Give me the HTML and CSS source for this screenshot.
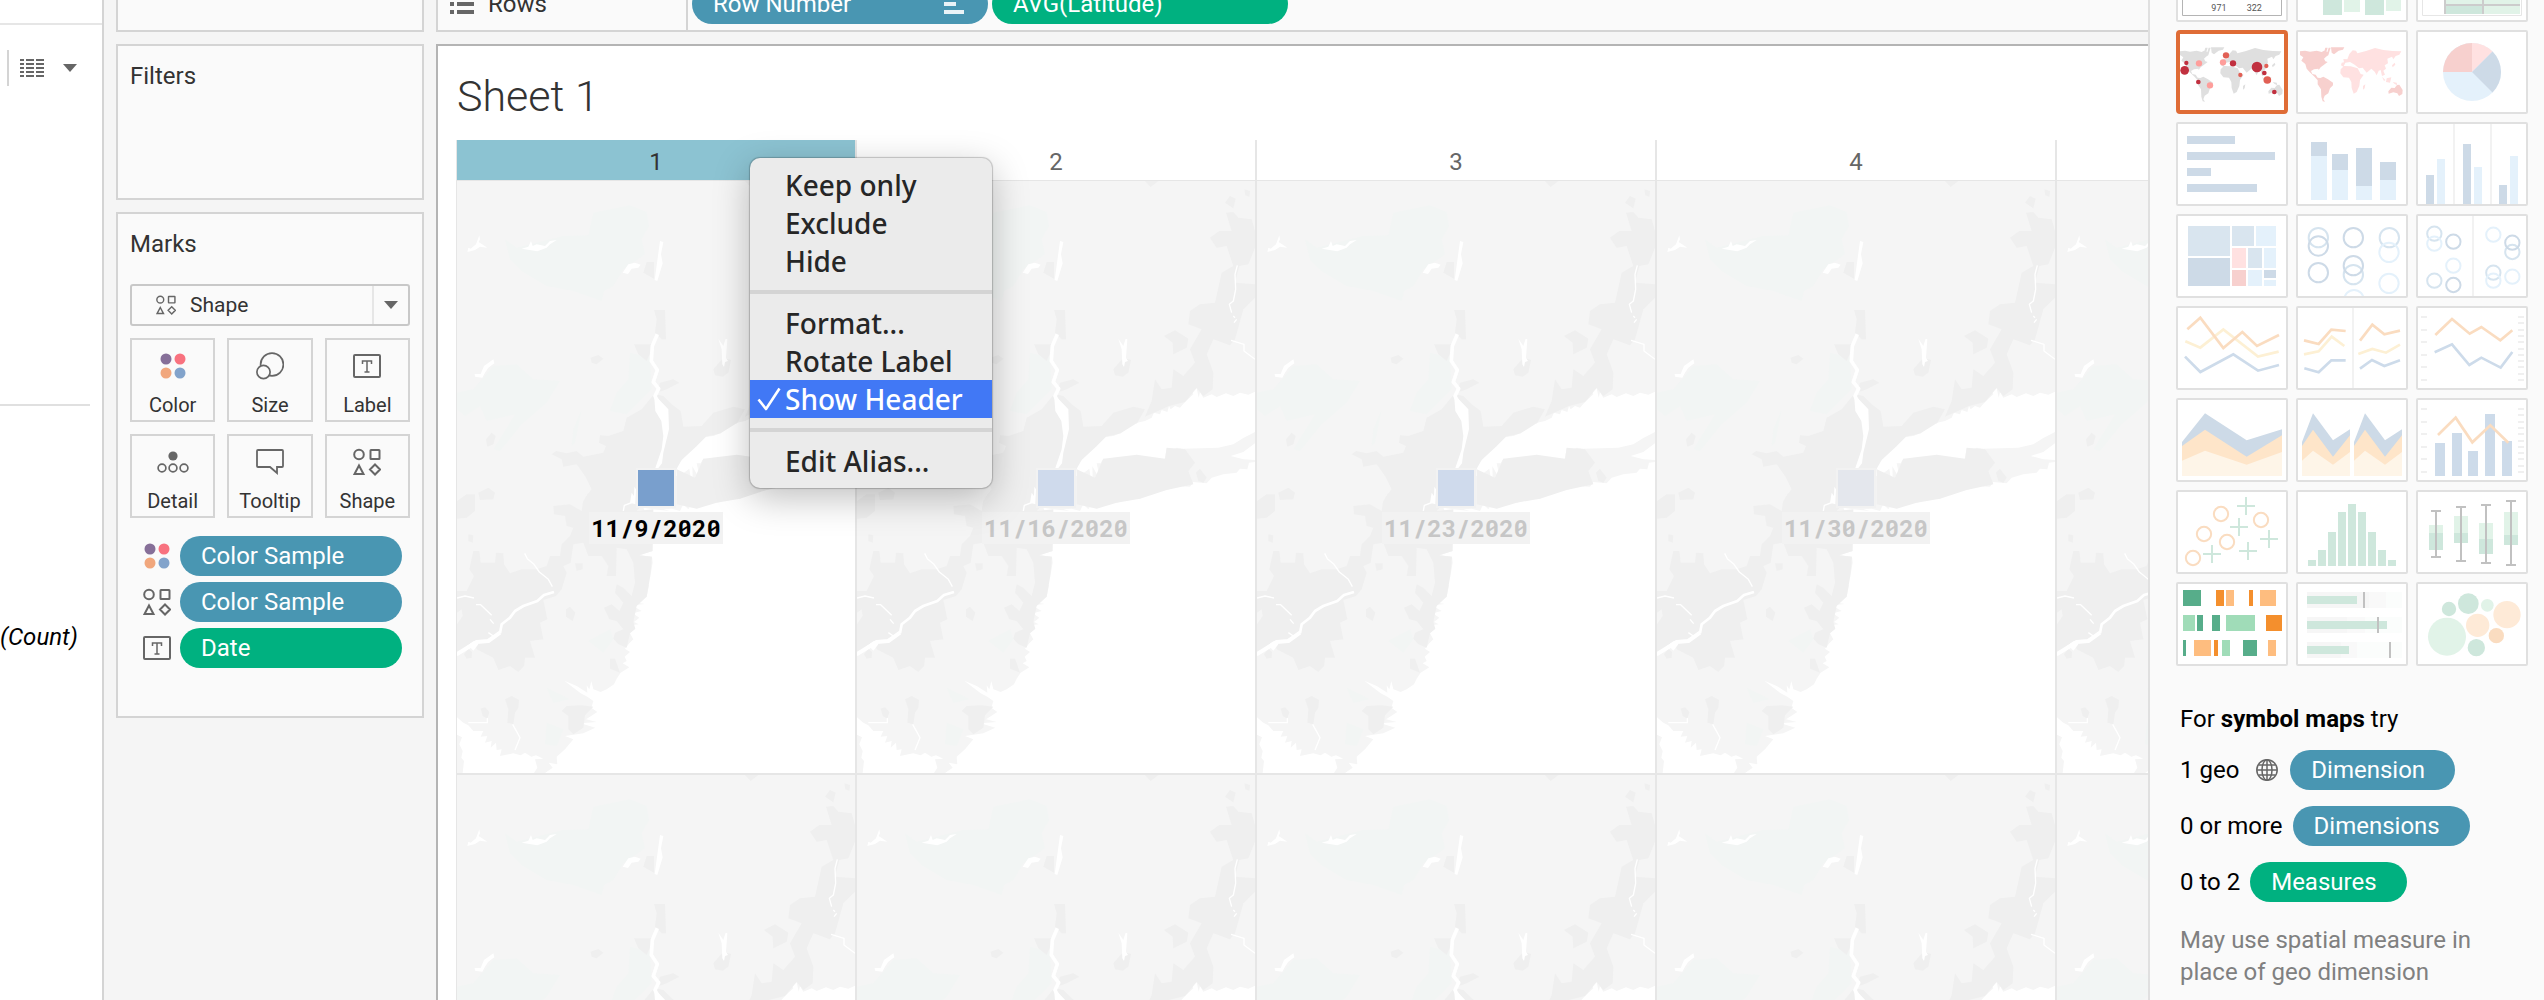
FILE: index.html
```html
<!DOCTYPE html>
<html lang="en">
<head>
<meta charset="utf-8">
<title>Sheet 1</title>
<link rel="stylesheet" href="styles.css">
</head>
<body>
<svg class="defs" aria-hidden="true">
  <defs>
    <symbol id="i-color" viewBox="0 0 26 26">
      <circle cx="6" cy="6" r="5.5" fill="#866f98"/><circle cx="20" cy="6" r="5.5" fill="#f8727f"/>
      <circle cx="6" cy="20" r="5.5" fill="#f1a77d"/><circle cx="20" cy="20" r="5.5" fill="#82a3cb"/>
    </symbol>
    <symbol id="i-shape" viewBox="0 0 28 28">
      <g fill="none" stroke="#666" stroke-width="2">
        <circle cx="6" cy="6.500" r="4.800"/><rect x="17.500" y="2" width="9" height="9" rx=".5"/>
        <path d="M6 17.500L10.500 26h-9zM22 16.500l5 5-5 5-5-5z"/>
      </g>
    </symbol>
    <symbol id="i-text" viewBox="0 0 28 24">
      <rect x="1" y="1" width="26" height="22" rx="1" fill="none" stroke="#666" stroke-width="2"/>
      <path d="M9.500 10V7h9v3M14 7v11M11.500 18h5" fill="none" stroke="#666" stroke-width="1.500"/>
    </symbol>
    <symbol id="i-size" viewBox="0 0 28 28">
      <g fill="#fafafa" stroke="#666" stroke-width="1.700"><circle cx="16" cy="12.500" r="11.400"/><circle cx="7.500" cy="20" r="6.600"/></g>
    </symbol>
    <symbol id="i-detail" viewBox="0 0 32 22">
      <circle cx="16" cy="5" r="4.600" fill="#666"/>
      <g fill="none" stroke="#666" stroke-width="1.700"><circle cx="5" cy="17" r="3.900"/><circle cx="16" cy="17" r="3.900"/><circle cx="27" cy="17" r="3.900"/></g>
    </symbol>
    <symbol id="i-tooltip" viewBox="0 0 28 28">
      <path d="M2 2h24q1 0 1 1v15q0 1-1 1h-5v6l-7-6H2q-1 0-1-1V3q0-1 1-1z" fill="none" stroke="#666" stroke-width="1.800"/>
    </symbol>
    <symbol id="terrain" viewBox="21 15 1194 1776">
      <path fill="#f5f5f5" d="M21 15H1215V647L1195 656 1170 650 1150 660 1128 652 1100 663 1085 655 1060 665 1050 648 1046 665 1040 636 1026 648 1030 655 1005 678 990 695 975 690 962 700 957 690 952 708 935 702 930 715 912 710 905 725 885 735 862 740 857 745 856 715 847 742 838 732 838 752 815 762 812 772 790 780 768 782 750 790 738 812 722 820 705 830 695 852 682 862 678 900 690 898 700 918 702 890 718 878 722 905 728 902 727 870 742 898 745 885 740 862 752 862 760 848 790 850 805 868 810 850 830 858 825 842 850 852 860 836 915 852 945 848 950 815 960 825 980 815 1000 818 1105 815 1150 805 1180 786 1215 768V802L1180 828 1142 840 1180 850 1215 852V858L1197 860 1192 880 1170 878 1160 890 1120 895 1085 905 1070 922 1030 918 1020 932 980 930 950 942 920 938 905 955 885 948 870 968 830 970 800 980 770 980 740 998 725 982 715 1000 700 985 690 1005 665 998 640 1000 660 1005 610 1000 580 995 590 1020 608 1105 588 1118 608 1125 568 1138 606 1142 608 1160 600 1205 578 1222 597 1228 590 1262 570 1265 560 1256 570 1282 585 1284 545 1288 575 1305 548 1312 568 1325 552 1338 566 1345 522 1350 556 1358 540 1372 550 1390 538 1402 525 1418 540 1428 524 1442 530 1455 518 1462 538 1474 512 1490 500 1508 492 1525 470 1540 452 1548 430 1540 424 1515 418 1540 410 1528 412 1550 380 1530 343 1514 392 1552 412 1562 430 1575 424 1595 442 1608 408 1630 440 1638 392 1642 436 1655 400 1672 345 1680 370 1690 345 1720 320 1742 322 1765 296 1760 308 1775 285 1791H252L262 1775 255 1750 280 1748 258 1738 244 1742 225 1730 212 1738 190 1732 150 1740 155 1720 140 1722 138 1700 122 1715 125 1695 105 1700 112 1680 92 1682 100 1665 70 1665 55 1648 40 1640 21 1624z"/>
      <path fill="#f5f5f5" d="M21 1676L36 1684 28 1705 38 1725 34 1745 42 1755 38 1791H21z"/>
      <g fill="#f2f5f4">
        <path d="M165 190L200 215 340 180 415 178 430 110 540 88 590 108 597 150 575 190 585 235 520 280 490 330 462 345 455 375 370 345 290 330 215 285 180 250z"/>
        <path d="M130 570L200 565 250 610 330 615 290 680 215 745 150 825 130 820 195 715 110 735 90 690 45 720 21 700V650L70 640zM540 530L600 545 605 640 530 715 480 705 500 650 535 610zM395 700L375 800 365 810 370 760zM415 1395L480 1360 490 1390 460 1430z"/>
        <path d="M290 1535L360 1570 310 1580zM290 1640L340 1660 320 1710 285 1705z"/>
      </g>
      <g fill="#efefef">
        <path d="M885 15L925 15 902 33zM1125 80L1140 60 1157 68 1150 97zM1183 40L1200 45 1198 62 1186 58zM1080 185L1108 165 1145 165 1128 110 1150 108 1165 125 1205 130 1215 165V215L1195 265 1168 270 1155 320 1215 325V365L1180 400 1155 490 1140 508 1090 490 1070 535 1090 590 1088 640 1060 660 1040 636 1005 678 957 690 912 710 885 722 905 675 915 610 935 640 965 635 970 580 1000 600 1035 560 1020 520 1055 460 1015 445 1020 405 1050 385 1095 380 1115 290 1150 270 1130 210 1100 215z"/>
        <path d="M885 700L862 740 812 772 768 782 738 812 695 852 680 878 560 1005 610 1000 608 1125 568 1138 606 1142 600 1205 590 1262 560 1290 550 1338 556 1358 540 1372 530 1415 505 1405 490 1388 495 1370 520 1360 500 1335 478 1330 462 1295 485 1285 508 1305 520 1280 495 1250 500 1225 520 1235 545 1260 555 1220 550 1160 530 1120 500 1115 498 1200 470 1200 475 1170 455 1140 415 1140 400 1100 370 1105 362 1160 340 1170 350 1190 335 1240 318 1260 280 1272 292 1330 270 1340 280 1390 240 1395 255 1445 225 1445 222 1470 205 1488 180 1470 145 1482 130 1445 80 1420 75 1395 21 1430V1245L50 1245 72 1200 58 1180 70 1125 88 1125 92 1160 135 1160 138 1130 160 1132 162 1165 180 1192 215 1180 260 1180 290 1170 300 1140 330 1140 335 1105 360 1080 370 1055 350 1050 345 1020 312 1015 310 990 360 985 395 1005 400 970 425 940 405 900 380 865 340 872 335 850 305 835 318 825 350 832 380 825 400 842 460 830 468 810 447 800 450 778 475 780 520 765 530 725 575 700 612 655 640 660 665 685 692 705 700 752 755 750 790 710 850 692z"/>
        <path d="M580 290L590 258 612 258 612 308zM612 402L645 402 648 490 635 490 615 470 620 430zM552 505L612 505 590 555 565 535zM422 545L445 537 460 548 440 565 425 560zM630 620L670 610 688 620 650 640 620 650zM790 580L820 545 843 552 835 590 818 602 795 598zM942 480L975 463 1015 488 1010 515 970 535 968 500zM108 790L125 770 137 780 130 805 112 812zM21 975L50 955 75 955 75 1005 50 1025 21 1028zM85 950L115 935 135 950 130 970 90 972z"/>
        <path d="M680 880L735 905 760 848 860 836 945 848 950 815 1005 820 1035 860 1015 885 1030 925 950 942 870 968 800 980 740 998 680 985zM1038 890L1050 878 1070 905 1060 920 1045 915z"/>
        <path d="M55 1075L70 1078 68 1100 55 1095zM375 1162L398 1162 398 1180 380 1185zM348 1300L360 1292 376 1310 368 1335 348 1322zM480 1448L495 1448 510 1490 480 1478zM42 1435L55 1418 66 1428 65 1445 50 1448zM92 1598L105 1594 118 1608 112 1628 98 1620zM165 1570L185 1560 207 1572 205 1595 195 1610 190 1645 172 1640 175 1600zM335 1605L350 1590 395 1588 430 1592 405 1618 400 1655 370 1675 355 1660 355 1620z"/>
      </g>
      <path fill="#f5f5f5" d="M385 990L405 960 410 920 420 940 395 985zM21 1310L35 1300 38 1320 21 1345z"/>
      <g fill="none" stroke="#fff" stroke-linejoin="round">
        <path stroke-width="12" d="M21 1434L80 1398 115 1395 150 1370"/>
        <path stroke-width="8" d="M150 1372L155 1345 180 1325 195 1305 220 1290 262 1275 282 1257 312 1248"/>
        <path stroke-width="4" d="M224 1132L232 1148 252 1165 268 1188 295 1210 307 1232M21 1266L45 1260 72 1266M78 1286L92 1286 125 1318M120 1330L131 1343M115 1370L130 1380M1143 493L1182 505V525L1215 550M1162 268L1155 295 1157 340 1150 375 1138 385 1145 410M1150 420L1155 425M1152 440L1160 430M520 1005L523 988 550 978M188 1645L210 1685 195 1722M55 1640H112V1626"/>
        <path stroke-width="11" d="M622 475L607 510 604 555 622 582 610 618 626 638 615 660 630 690"/>
      </g>
      <g fill="#fff">
        <path d="M630 195L640 198 633 235 638 262 622 315 614 312zM612 655L655 700 657 760 640 830 636 862 625 876 616 876 635 820 640 780 634 735 616 705zM518 290L535 265 555 260 572 266 565 275 545 278 534 294zM52 228L55 215 62 218 78 205 88 178 90 190 86 198 112 215 90 212 75 222zM215 218L235 212 243 195 248 210 260 205 285 210 300 195 320 192 300 205 290 215 262 226zM74 594H92L102 570 130 550 133 562 115 575 105 590 97 605 75 602zM805 488L820 510 827 488 832 490 828 545 834 555 825 558 822 573 817 565 815 520zM540 980L545 950 552 960 553 932 558 940 556 985z"/>
        <path d="M21 1433L70 1396 85 1405 70 1424 62 1415 45 1425 21 1440z"/>
      </g>
    </symbol>
    <symbol id="land-west" viewBox="120 102 312 228" overflow="visible">
      <path d="M120 154L135 152 150 155 170 152 185 156 196 150 202 157 206 143 212 143 208 155 205 166 198 170 192 176 196 184 203 186 192 194 182 202 176 210 175 206 162 208 153 213 157 222 167 224 173 233 181 234 190 230 204 238 219 248 219 256 210 265 205 280 194 287 190 298 195 305 188 304 184 290 183 268 173 253 173 241 162 229 148 215 140 206 136 192 124 182 130 172 120 165zM196 143L203 143 200 153 194 150zM213 142H253L249 149 236 152 222 163 215 158zM385 274L394 263 404 264 411 255 418 254 428 270 427 282 417 288 412 280 400 277 386 281z"/>
    </symbol>
    <symbol id="land-east" viewBox="120 102 312 228" overflow="visible">
      <path d="M243 196L245 188 252 187 250 177 262 178 268 162 278 151 288 152 292 160 318 153 345 144 370 150 398 153 424 154 418 164 407 168 400 178 396 170 382 176 384 190 374 196 378 206 370 212 375 224 366 228 362 210 356 212 350 226 344 215 334 206 320 218 308 203 297 205 284 194 270 186 256 188 250 200zM242 208L252 198 272 199 293 205 302 222 311 224 300 240 298 258 290 276 281 281 275 264 274 246 267 233 250 232 241 220zM309 258L316 253 314 265 309 269zM366 230L376 240 372 243zM380 235L394 232 390 248 378 246zM398 246L410 248 412 256 404 252zM396 196L404 188 406 194 398 202z"/>
    </symbol>
  </defs>
</svg>

<div class="app">
  <aside class="data-pane">
    <div class="data-tools">
      <button class="list-view" aria-label="View data">
        <svg width="24" height="18" viewBox="0 0 24 18"><path d="M0 1h24M0 5h24M0 9h24M0 13h24M0 17h24" stroke="#666" stroke-width="2"/><path d="M5 0v18M15 0v18" stroke="#fff" stroke-width="2"/></svg>
      </button>
      <button class="caret-button" aria-label="Data pane menu"><span class="caret"></span></button>
    </div>
    <div class="fields"></div>
    <p class="measure">(Count)</p>
  </aside>

  <aside class="cards">
    <section class="card card-pages"></section>
    <section class="card card-filters"><h2>Filters</h2></section>
    <section class="card card-marks">
      <h2>Marks</h2>
      <div class="mark-type">
        <select aria-label="Mark type"><option>Shape</option></select>
        <svg width="20" height="20"><use href="#i-shape"/></svg>
        <span class="drop"><span class="caret"></span></span>
      </div>
      <div class="mark-buttons">
        <button><svg width="26" height="26"><use href="#i-color"/></svg><span>Color</span></button>
        <button><svg width="28" height="28"><use href="#i-size"/></svg><span>Size</span></button>
        <button><svg width="28" height="24"><use href="#i-text"/></svg><span>Label</span></button>
        <button><svg width="32" height="22"><use href="#i-detail"/></svg><span>Detail</span></button>
        <button><svg width="28" height="28"><use href="#i-tooltip"/></svg><span>Tooltip</span></button>
        <button><svg width="28" height="28"><use href="#i-shape"/></svg><span>Shape</span></button>
      </div>
      <ul class="encodings">
        <li><svg width="26" height="26"><use href="#i-color"/></svg><button class="pill blue">Color Sample</button></li>
        <li><svg width="28" height="28"><use href="#i-shape"/></svg><button class="pill blue">Color Sample</button></li>
        <li><svg width="28" height="24"><use href="#i-text"/></svg><button class="pill green">Date</button></li>
      </ul>
    </section>
  </aside>

  <main class="workspace">
    <section class="shelf">
      <div class="shelf-name">
        <svg width="24" height="20" viewBox="0 0 24 20"><path d="M0 2h4M7 2h17M0 10h4M7 10h17M0 18h4M7 18h17" stroke="#666" stroke-width="4"/></svg>
        <span>Rows</span>
      </div>
      <div class="shelf-pills">
        <button class="pill blue">Row Number
          <svg width="20" height="20" viewBox="0 0 20 20"><path d="M0 2h8M0 10h12M0 18h20" stroke="#eaf3f7" stroke-width="4"/></svg>
        </button>
        <button class="pill green">AVG(Latitude)</button>
      </div>
    </section>

    <section class="sheet">
      <h1>Sheet 1</h1>
      <div class="view">
        <div class="trellis">
          <div class="head selected">1</div><div class="head">2</div><div class="head">3</div><div class="head">4</div><div class="head"></div>
          <div class="map active"><svg><use href="#terrain"/></svg><div class="mark"><i class="swatch c1"></i><b>11/9/2020</b></div></div>
          <div class="map"><svg><use href="#terrain"/></svg><div class="mark"><i class="swatch c2"></i><b>11/16/2020</b></div></div>
          <div class="map"><svg><use href="#terrain"/></svg><div class="mark"><i class="swatch c2"></i><b>11/23/2020</b></div></div>
          <div class="map"><svg><use href="#terrain"/></svg><div class="mark"><i class="swatch c3"></i><b>11/30/2020</b></div></div>
          <div class="map"><svg><use href="#terrain"/></svg></div>
          <div class="map"><svg><use href="#terrain"/></svg></div>
          <div class="map"><svg><use href="#terrain"/></svg></div>
          <div class="map"><svg><use href="#terrain"/></svg></div>
          <div class="map"><svg><use href="#terrain"/></svg></div>
          <div class="map"><svg><use href="#terrain"/></svg></div>
        </div>
      </div>
      <div class="menu" role="menu">
        <button role="menuitem">Keep only</button>
        <button role="menuitem">Exclude</button>
        <button role="menuitem">Hide</button>
        <hr>
        <button role="menuitem">Format...</button>
        <button role="menuitem">Rotate Label</button>
        <button role="menuitemcheckbox" aria-checked="true" class="on"><svg width="24" height="24" viewBox="0 0 24 24"><path d="M1.500 12.500L9 22 22.500 1.500" fill="none" stroke="#fff" stroke-width="2.600" stroke-linejoin="round"/></svg>Show Header</button>
        <hr>
        <button role="menuitem">Edit Alias...</button>
      </div>
    </section>
  </main>

  <aside class="show-me">
    <div class="gallery">
      <button aria-label="Text table"><svg viewBox="114 -180 324 240"><path d="M127.500-160V46.500H424.500V-160" fill="none" stroke="#b4b4b4" stroke-width="3"/><g font-family="Roboto" font-size="27" fill="#555"><text x="214" y="32">971</text><text x="320" y="32">322</text></g></svg></button>
      <button aria-label="Heat map"><svg viewBox="474 -180 324 240"><path fill="#cee7dc" d="M549-30h57v75h-57zM675-30h57v75h-57z"/><path fill="#e1f3e8" d="M612-30h48v66h-48zM738-30h45v63h-45z"/></svg></button>
      <button aria-label="Highlight table"><svg viewBox="834 -180 324 240"><path fill="none" stroke="#e6e6e6" stroke-width="3" d="M847.500-160V46.500H1144.500V-160"/><path fill="#e1f3e8" d="M915-60h225V42H915z"/><path fill="#cee7dc" d="M915 15h114v27H915z"/><path d="M915-60V42M1029-60V42M912 15h228" stroke="#ccc" stroke-width="6" fill="none"/></svg></button>

      <button aria-label="Symbol map" class="chosen"><svg viewBox="120 102 312 228"><g fill="#dfdfdf"><use href="#land-west" x="120" y="102" width="312" height="228"/><use href="#land-east" x="120" y="102" width="312" height="228"/></g><g fill="#c1303f"><circle cx="139" cy="189" r="6.500"/><circle cx="134" cy="211" r="13"/><circle cx="279" cy="190" r="9.500"/><circle cx="351" cy="201" r="16"/><circle cx="373" cy="219" r="7"/><circle cx="175" cy="246" r="7"/><circle cx="403" cy="276" r="7"/></g><g fill="#e16055"><circle cx="258" cy="166" r="9.500"/><circle cx="379" cy="198" r="6.500"/><circle cx="301" cy="225" r="6.500"/><circle cx="382" cy="240" r="11.500"/></g><g fill="#fe9e9b"><circle cx="177" cy="190" r="9.500"/><circle cx="249" cy="187" r="9.500"/><circle cx="210" cy="256" r="9.500"/></g></svg></button>
      <button aria-label="Map"><svg viewBox="114 96 324 240"><use href="#land-west" x="120" y="102" width="312" height="228" fill="#f7d0ce"/><use href="#land-east" x="120" y="102" width="312" height="228" fill="#ffe1e1"/></svg></button>
      <button aria-label="Pie chart"><svg viewBox="834 96 324 240"><circle cx="996" cy="216" r="87" fill="#e4f1fb"/><path fill="#f7d0ce" d="M996 216H909A87 87 0 0 1 996 129z"/><path fill="#ffe1e1" d="M996 216V129A87 87 0 0 1 1057.500 154.500z"/><path fill="#cddae7" d="M996 216L1057.500 154.500A87 87 0 0 1 1057.500 277.500z"/></svg></button>

      <button aria-label="Horizontal bars"><svg viewBox="114 372 324 240"><path fill="#cddae7" d="M141 408h144v24H141zM141 456h264v24H141zM141 504h72v24h-72zM141 552h210v24H141z"/></svg></button>
      <button aria-label="Stacked bars"><svg viewBox="474 372 324 240"><path fill="#e4f1fb" d="M513 468h48v132h-48zM576 510h48v90h-48zM648 558h48v42h-48zM720 540h48v60h-48z"/><path fill="#cddae7" d="M513 426h48v42h-48zM576 462h48v48h-48zM648 444h48v114h-48zM720 486h48v54h-48z"/></svg></button>
      <button aria-label="Side-by-side bars"><svg viewBox="834 372 324 240"><path fill="#f2f2f2" d="M939 372h6v240h-6zM1050 372h6v240h-6z"/><path fill="#cddae7" d="M858 525h24v87h-24zM969 432h24v180h-24zM1077 555h24v57h-24z"/><path fill="#e4f1fb" d="M891 477h24v135h-24zM1002 501h24v111h-24zM1110 468h24v144h-24z"/></svg></button>

      <button aria-label="Treemap"><svg viewBox="114 648 324 240"><path fill="#d9e5ef" d="M144 678h126v90H144zM276 678h66v60h-66zM324 744h42v60h-42z"/><path fill="#e4f1fb" d="M348 678h60v60h-60zM372 744h36v60h-36zM324 810h42v48h-42zM372 840h36v18h-36z"/><path fill="#cddae7" d="M144 774h126v84H144zM372 810h36v24h-36z"/><path fill="#ffe1e1" d="M276 744h42v60h-42z"/><path fill="#f7d0ce" d="M276 810h42v48h-42z"/></svg></button>
      <button aria-label="Circle views"><svg viewBox="474 648 324 240"><g fill="none" stroke-width="6"><g stroke="#d6e4ef"><circle cx="535" cy="713" r="29"/><circle cx="640" cy="824" r="29"/><circle cx="748" cy="713" r="29"/></g><g stroke="#cddae7"><circle cx="535" cy="738" r="29"/><circle cx="535" cy="818" r="29"/><circle cx="640" cy="713" r="29"/><circle cx="640" cy="797" r="29"/></g><g stroke="#e4f1fb"><circle cx="747" cy="757" r="29"/><circle cx="747" cy="850" r="29"/><circle cx="642" cy="899" r="29"/></g></g></svg></button>
      <button aria-label="Side-by-side circles"><svg viewBox="834 648 324 240"><path fill="#f2f2f2" d="M996 648h6v240h-6z"/><g fill="none" stroke-width="6"><g stroke="#d6e4ef"><circle cx="883" cy="701" r="21.500"/><circle cx="883" cy="842" r="21.500"/><circle cx="1117" cy="756" r="21.500"/><circle cx="1060" cy="818" r="21.500"/></g><g stroke="#cddae7"><circle cx="940" cy="725" r="21.500"/><circle cx="940" cy="855" r="21.500"/><circle cx="1117" cy="728" r="21.500"/></g><g stroke="#e4f1fb"><circle cx="883" cy="731" r="21.500"/><circle cx="940" cy="797" r="21.500"/><circle cx="1060" cy="704" r="21.500"/><circle cx="1060" cy="842" r="21.500"/><circle cx="1117" cy="830" r="21.500"/></g></g></svg></button>

      <button aria-label="Continuous lines"><svg viewBox="114 24 324 240"><g fill="none" stroke-width="8"><path stroke="#fdf0d4" d="M136 124L181 143 250 88 354 170 416 155"/><path stroke="#fadcc0" d="M142 88L181 53 250 144 307 96 351 138 417 105"/><path stroke="#cddbea" d="M135 170L181 216 280 163 354 212 417 195"/></g></svg></button>
      <button aria-label="Discrete lines"><svg viewBox="474 24 324 240"><path fill="#f2f2f2" d="M636 24h6v240h-6z"/><g fill="none" stroke-width="8"><path stroke="#fdf0d4" d="M492 163L536 154 575 110 613 138M655 162L697 147 738 158 780 134"/><path stroke="#fadcc0" d="M492 121L536 132 574 89 617 93M660 122L697 74 733 103 780 92"/><path stroke="#cddbea" d="M493 205L536 217 574 181H617M660 206L696 180 733 198 780 181"/></g></svg></button>
      <button aria-label="Dual lines"><svg viewBox="834 24 324 240"><path stroke="#f0f0f0" stroke-width="6" d="M843 51h18M843 90h18M843 126h18M843 165h18M843 201h18M843 240h18M1134 51h18M1134 69h18M1134 90h18M1134 108h18M1134 126h18M1134 147h18M1134 165h18M1134 183h18M1134 201h18M1134 222h18M1134 240h18"/><g fill="none" stroke-width="8"><path stroke="#fadcc0" d="M886 105L936 57 989 101 1024 81 1081 121 1117 91"/><path stroke="#cddbea" d="M884 157L936 133 988 195 1024 173 1082 203 1117 156"/></g></svg></button>

      <button aria-label="Continuous area"><svg viewBox="114 300 324 240"><path fill="#cddae7" d="M126 426L195 340 320 421 426 388V528H126z"/><path fill="#fee5c9" d="M126 438L195 389 320 470 426 406V528H126z"/><path fill="#fef5e8" d="M126 482L195 452 320 494 426 456V528H126z"/></svg></button>
      <button aria-label="Discrete area"><svg viewBox="474 300 324 240"><path fill="#cddae7" d="M486 426L519 340 579 421 630 388V528H486zM642 426L675 340 735 421 786 388V528H642z"/><path fill="#fee5c9" d="M486 438L519 389 579 470 630 406V528H486zM642 438L675 389 735 470 786 406V528H642z"/><path fill="#fef5e8" d="M486 482L519 452 579 494 630 456V528H486zM642 482L675 452 735 494 786 456V528H642z"/></svg></button>
      <button aria-label="Dual combination"><svg viewBox="834 300 324 240"><path stroke="#f0f0f0" stroke-width="6" d="M843 327h18M843 366h18M843 402h18M843 441h18M843 477h18M843 516h18M1134 327h18M1134 345h18M1134 366h18M1134 384h18M1134 402h18M1134 423h18M1134 441h18M1134 459h18M1134 477h18M1134 498h18M1134 516h18"/><path fill="#cddbea" d="M885 429h30v99h-30zM936 399h30v129h-30zM984 453h30v75h-30zM1035 342h30v186h-30zM1086 423h30v105h-30z"/><path fill="none" stroke="#fadcc0" stroke-width="8" d="M894 405L947 353 997 427 1051 376 1105 428"/></svg></button>

      <button aria-label="Scatter plot"><svg viewBox="114 576 324 240"><g fill="none" stroke-width="6"><g stroke="#fadcc0"><circle cx="243" cy="642" r="21.500"/><circle cx="363" cy="660" r="21.500"/><circle cx="192" cy="702" r="21.500"/><circle cx="261" cy="726" r="21.500"/><circle cx="159" cy="774" r="21.500"/></g><path stroke="#cee7dc" d="M318 591v54M291 618h54M297 654v54M270 681h54M387 690v54M360 717h54M324 726v54M297 753h54M216 735v54M189 762h54"/></g></svg></button>
      <button aria-label="Histogram"><svg viewBox="474 576 324 240"><path fill="#cee7dc" d="M504 780h24v18h-24zM534 750h24v48h-24zM564 696h24v102h-24zM594 636h24v162h-24zM624 612h24v186h-24zM654 636h24v162h-24zM684 696h24v102h-24zM714 750h24v48h-24zM744 780h24v18h-24z"/></svg></button>
      <button aria-label="Box-and-whisker plot"><svg viewBox="834 576 324 240"><path fill="#e1f3e8" d="M867 675h42v24h-42zM942 648h42v51h-42zM1017 669h42v48h-42zM1092 636h42v69h-42z"/><path fill="#cee7dc" d="M867 699h42v51h-42zM942 699h42v30h-42zM1017 717h42v45h-42zM1092 705h42v30h-42z"/><path fill="none" stroke="#c1c1c1" stroke-width="6" d="M873 633h30M888 633v138M873 771h30M948 621h30M963 621v162M948 783h30M1023 615h30M1038 615v174M1023 789h30M1098 603h30M1113 603v192M1098 795h30"/></svg></button>

      <button aria-label="Gantt chart"><svg viewBox="114 852 324 240"><path fill="#57ad8a" d="M129 870h54v48h-54zM171 945h18v48h-18zM216 945h24v48h-24zM129 1020h9v48h-9zM309 1020h42v48h-42z"/><path fill="#a0dcb8" d="M129 945h36v48h-36zM258 945h87v48h-87zM246 1020h24v48h-24z"/><path fill="#f48f2d" d="M228 870h24v48h-24zM327 870h12v48h-12zM378 945h48v48h-48zM222 1020h12v48h-12z"/><path fill="#febd7f" d="M258 870h24v48h-24zM360 870h48v48h-48zM162 1020h51v48h-51zM384 1020h24v48h-24z"/></svg></button>
      <button aria-label="Bullet graph"><svg viewBox="474 852 324 240"><path fill="#fbfdfc" d="M501 876h285v48H501zM501 951h285v48H501zM501 1026h285v48H501z"/><path fill="#f9f9f9" d="M501 876h237v48H501zM501 951h174v48H501zM501 1026h150v48H501z"/><path fill="#f6f6f6" d="M501 876h186v48H501zM501 951h120v48H501zM501 1026h102v48H501z"/><path fill="#cee7dc" d="M501 888h150v24H501zM501 963h240v24H501zM501 1038h126v24H501z"/><path fill="#c1c1c1" d="M669 876h6v48h-6zM711 951h6v48h-6zM747 1026h6v48h-6z"/></svg></button>
      <button aria-label="Packed bubbles"><svg viewBox="834 852 324 240"><g fill="#e1f3e8"><circle cx="921" cy="1010" r="57"/><circle cx="1042" cy="916" r="19"/></g><g fill="#cee7dc"><circle cx="927" cy="927" r="21.500"/><circle cx="985" cy="911" r="31"/><circle cx="1009" cy="1043" r="26"/></g><g fill="#feead7"><circle cx="1013" cy="976" r="35"/><circle cx="1101" cy="944" r="41"/></g><circle cx="1069" cy="1007" r="23" fill="#fadcc0"/></svg></button>
    </div>
    <div class="advice">
      <p>For <strong>symbol maps</strong> try</p>
      <p class="need"><span>1 geo</span><svg class="globe" width="24" height="24" viewBox="0 0 24 24"><g fill="none" stroke="#666" stroke-width="1.500"><circle cx="12" cy="12" r="10.200"/><ellipse cx="12" cy="12" rx="5" ry="10.200"/><path d="M12 2v20M2 12h20M3.500 7h17M3.500 17h17"/></g></svg><span class="pill blue">Dimension</span></p>
      <p class="need"><span>0 or more</span><span class="pill blue">Dimensions</span></p>
      <p class="need"><span>0 to 2</span><span class="pill green">Measures</span></p>
      <p class="note">May use spatial measure in place of geo dimension</p>
    </div>
  </aside>
</div>
</body>
</html>
```
FILE: styles.css
```css
* {
  box-sizing: border-box;
}

body,
h1,
h2,
p,
ul {
  margin: 0;
  padding: 0;
}

body {
  background: #f5f5f5;
  color: #333;
  font: 24px/30px Roboto, "Liberation Sans", sans-serif;
}

button,
select {
  margin: 0;
  padding: 0;
  border: 0;
  background: none;
  color: inherit;
  font: inherit;
}

svg {
  display: block;
  flex: none;
}

.defs {
  position: absolute;
  width: 0;
  height: 0;
}

.app {
  display: flex;
  height: 100vh;
  overflow: hidden;
}

.caret {
  display: block;
  border: 7px solid transparent;
  border-top: 8px solid #666;
  border-bottom: 0;
}

/* Data pane */
.data-pane {
  flex: none;
  width: 104px;
  padding-top: 23px;
  overflow: hidden;
  background: #fff;
  border-right: 2px solid #d4d4d4;
}

.data-tools {
  display: flex;
  align-items: center;
  height: 88px;
  padding-left: 7px;
  border-top: 2px solid #e6e6e6;
}

.list-view {
  display: flex;
  align-items: center;
  height: 36px;
  padding: 0 19px 0 11px;
  border-left: 2px solid #d4d4d4;
}

.fields {
  height: 295px;
  margin-right: 12px;
  border-bottom: 2px solid #e0e0e0;
}

.measure {
  margin-top: 216px;
  color: #000;
  font-style: italic;
}

/* Cards */
.cards {
  flex: none;
  display: flex;
  flex-direction: column;
  gap: 12px;
  width: 332px;
  padding: 0 12px;
}

.card {
  padding: 15px 12px 14px;
  background: #fafafa;
  border: 2px solid #d4d4d4;
}

.card h2 {
  font-size: 24px;
  font-weight: 400;
}

.card-pages {
  height: 32px;
  border-top: 0;
}

.card-filters {
  height: 156px;
}

.card-marks {
  padding-bottom: 48px;
}

.mark-type {
  display: grid;
  align-items: center;
  height: 42px;
  margin: 25px 0 12px;
}

.mark-type > * {
  grid-area: 1 / 1;
}

.mark-type select {
  appearance: none;
  width: 100%;
  height: 42px;
  padding-left: 58px;
  border: 2px solid #c8c8c8;
  border-radius: 3px;
  font-size: 21px;
}

.mark-type svg {
  margin-left: 26px;
}

.drop {
  justify-self: end;
  display: flex;
  align-items: center;
  height: 38px;
  margin-right: 2px;
  padding: 0 10px;
  border-left: 2px solid #e6e6e6;
  pointer-events: none;
}

.mark-buttons {
  display: grid;
  grid-template-columns: repeat(3, 1fr);
  gap: 12px;
}

.mark-buttons button {
  display: grid;
  grid-template-rows: 52px 26px;
  place-items: center;
  height: 84px;
  border: 2px solid #d4d4d4;
  font-size: 20px;
  line-height: 26px;
}

.encodings {
  display: grid;
  gap: 6px;
  margin-top: 18px;
  padding: 0 8px 0 4px;
  list-style: none;
}

.encodings li {
  display: grid;
  grid-template-columns: 46px 1fr;
  align-items: center;
}

.encodings svg {
  justify-self: center;
}

.pill {
  display: flex;
  align-items: center;
  justify-content: space-between;
  height: 40px;
  padding: 0 30px 0 21px;
  border-radius: 20px;
  color: #fff;
  white-space: nowrap;
}

.blue {
  background: #4996b2;
}

.green {
  background: #00b180;
}

/* Workspace */
.workspace {
  flex: 1;
  display: flex;
  flex-direction: column;
  gap: 12px;
  min-width: 0;
}

.shelf {
  flex: none;
  display: flex;
  height: 56px;
  margin-top: -24px;
  background: #fafafa;
  border: solid #d4d4d4;
  border-width: 0 0 2px 2px;
}

.shelf-name {
  display: flex;
  align-items: center;
  gap: 14px;
  width: 250px;
  padding: 2px 0 0 12px;
  border-right: 2px solid #d4d4d4;
}

.shelf-pills {
  display: flex;
  gap: 4px;
  padding: 8px 4px 6px;
}

.shelf-pills .pill {
  width: 296px;
  padding-right: 24px;
}

.sheet {
  position: relative;
  flex: 1;
  min-height: 0;
  padding-left: 18px;
  overflow: hidden;
  background: #fff;
  border: solid #b4b4b4;
  border-width: 2px 0 0 2px;
}

.sheet h1 {
  height: 94px;
  padding: 26px 0 0 1px;
  font-size: 43px;
  font-weight: 300;
  line-height: 48px;
}

.view {
  overflow: hidden;
}

.trellis {
  display: grid;
  grid-template-columns: repeat(5, 400px);
  width: max-content;
  border-left: 1px solid #e6e6e6;
}

.head {
  height: 41px;
  border: solid #e6e6e6;
  border-width: 0 2px 1px 0;
  color: #666;
  line-height: 44px;
  text-align: center;
}

.head.selected {
  background: #8cc3d2;
  color: #333;
}

.map {
  display: grid;
  height: 594px;
  border: solid #e6e6e6;
  border-width: 0 2px 2px 0;
}

.map > * {
  grid-area: 1 / 1;
}

.map > svg {
  width: 100%;
  height: 592px;
}

.mark {
  display: flex;
  flex-direction: column;
  align-items: center;
  gap: 4px;
  padding-top: 287px;
  color: #c6c6c6;
}

.mark b {
  padding: 0 2px;
  background: #f2f2f2;
  font: 700 24px/32px "Roboto Mono", "DejaVu Sans Mono", monospace;
}

.swatch {
  width: 40px;
  height: 40px;
  border: 2px solid #f2f2f2;
}

.active .mark {
  color: #000;
}

.c1 {
  background: #799fcd;
}

.c2 {
  background: #cfdaec;
}

.c3 {
  background: #e4e7ed;
}

/* Context menu over the view */
.menu {
  position: absolute;
  top: 112px;
  left: 312px;
  width: 242px;
  padding: 8px 0;
  background: #ebebeb;
  border-radius: 10px;
  box-shadow: 0 0 1px 1px rgba(0, 0, 0, 0.2), 0 10px 36px rgba(0, 0, 0, 0.25);
  color: #262626;
  font: 500 28px/38px "Noto Sans", sans-serif;
}

.menu button {
  display: flex;
  align-items: center;
  width: 100%;
  height: 38px;
  padding-left: 35px;
  white-space: nowrap;
}

.menu .on {
  gap: 4px;
  padding-left: 7px;
  background: #4178f5;
  color: #fff;
}

.menu hr {
  height: 4px;
  margin: 10px 0;
  border: 0;
  background: #d4d4d4;
}

/* Chart suggestions */
.show-me {
  flex: none;
  width: 396px;
  padding: 0 16px 0 26px;
  background: #fafafa;
  border-left: 2px solid #e0e0e0;
}

.gallery {
  display: grid;
  grid-template-columns: repeat(3, 1fr);
  gap: 8px;
  margin-top: -62px;
}

.gallery button {
  height: 84px;
  overflow: hidden;
  background: #fff;
  border: 2px solid #e0e0e0;
  border-radius: 2px;
}

.gallery svg {
  width: 100%;
  height: 100%;
}

.gallery .chosen {
  border: 4px solid #df6c36;
  border-radius: 4px;
}

.advice {
  display: grid;
  gap: 16px;
  padding: 38px 0 0 4px;
  color: #000;
}

.advice strong {
  font-weight: 700;
}

.need {
  display: flex;
  align-items: center;
  gap: 10px;
}

.globe {
  margin: 0 1px 0 6px;
}

.advice .note {
  margin-top: 6px;
  color: #808080;
  line-height: 32px;
}
```
